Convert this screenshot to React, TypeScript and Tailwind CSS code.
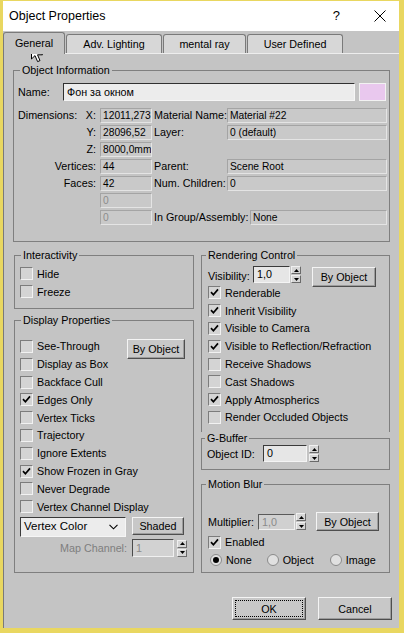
import React from "react";

type Kids = { children?: React.ReactNode };

function Legend({ children, className = "ml-[6px]" }: Kids & { className?: string }) {
  return <legend className={`px-[2px] leading-[13px] ${className}`}>{children}</legend>;
}

function Box({ checked }: { checked?: boolean }) {
  return (
    <span className="w-[13px] h-[13px] shrink-0 border border-t-[#7c7c7c] border-l-[#7c7c7c] border-b-[#f2f2f2] border-r-[#f2f2f2] bg-[#d4d4d4] flex items-center justify-center">
      {checked && (
        <svg width="9" height="9" viewBox="0 0 9 9">
          <path d="M1 4.2 L3.4 6.8 L8 1.4" stroke="#000" strokeWidth="1.7" fill="none" />
        </svg>
      )}
    </span>
  );
}

function Check({ label, checked }: { label: string; checked?: boolean }) {
  return (
    <div className="flex items-center h-[17.8px] gap-[4px] whitespace-nowrap">
      <Box checked={checked} />
      <span>{label}</span>
    </div>
  );
}

function Arrows() {
  return (
    <span className="flex flex-col w-[10px] h-[17px] gap-[1px]">
      <span className="flex-1 bg-[#d6d6d6] border border-t-[#f0f0f0] border-l-[#f0f0f0] border-b-[#6a6a6a] border-r-[#6a6a6a] flex items-center justify-center">
        <svg width="5" height="3" viewBox="0 0 5 3">
          <path d="M0 3 L2.5 0 L5 3Z" fill="#000" />
        </svg>
      </span>
      <span className="flex-1 bg-[#d6d6d6] border border-t-[#f0f0f0] border-l-[#f0f0f0] border-b-[#6a6a6a] border-r-[#6a6a6a] flex items-center justify-center">
        <svg width="5" height="3" viewBox="0 0 5 3">
          <path d="M0 0 L2.5 3 L5 0Z" fill="#000" />
        </svg>
      </span>
    </span>
  );
}

function Btn({ children, className }: Kids & { className: string }) {
  return (
    <div
      className={`flex items-center justify-center bg-[#c8c8c8] border border-t-[#f4f4f4] border-l-[#f4f4f4] border-b-[#4e4e4e] border-r-[#4e4e4e] shadow-[inset_-1px_-1px_0_#9c9c9c] ${className}`}
    >
      {children}
    </div>
  );
}

function Field({ children, className, gray }: Kids & { className: string; gray?: boolean }) {
  return (
    <div
      className={`h-[15px] shrink-0 overflow-hidden whitespace-nowrap pl-[2px] leading-[13px] text-[10.25px] bg-[#c9c9c9] border border-t-[#a4a4a4] border-l-[#a4a4a4] border-b-[#e4e4e4] border-r-[#e4e4e4] ${
        gray ? "text-[#8c8c8c]" : "text-black"
      } ${className}`}
    >
      {children}
    </div>
  );
}

function InfoRow({
  left,
  value,
  gray,
  label,
  right,
  labelW = "w-[73px]",
  rightW = "w-[160px]",
}: {
  left: React.ReactNode;
  value: string;
  gray?: boolean;
  label?: string;
  right?: string;
  labelW?: string;
  rightW?: string;
}) {
  return (
    <div className="flex items-center h-[15px]">
      <div className="w-[82px] pr-[4px] flex items-center justify-end">{left}</div>
      <Field className="w-[52px]" gray={gray}>
        {value}
      </Field>
      {label && <div className={`ml-[2px] whitespace-nowrap ${labelW}`}>{label}</div>}
      {right !== undefined && <Field className={rightW}>{right}</Field>}
    </div>
  );
}

function Cursor() {
  return (
    <svg className="absolute left-[28px] top-[42px]" width="13" height="20" viewBox="0 0 13 20">
      <path
        d="M0.5 0.5 L0.5 16 L4 12.6 L6.6 18.6 L9 17.6 L6.5 11.8 L11.5 11.8 Z"
        fill="#fff"
        stroke="#000"
        strokeWidth="1"
        strokeLinejoin="round"
      />
    </svg>
  );
}

export default function App() {
  return (
    <div className="relative w-[404px] h-[633px] overflow-hidden border-t-[1px] border-l-[3px] border-r-[5px] border-b-[5px] border-[#e9d760] bg-[#c4c4c4] font-['Liberation_Sans',Arial,sans-serif] text-[10.75px] text-black">
      {/* title bar */}
      <div className="h-[30px] bg-white flex items-center pl-[6px] pr-[13px]">
        <span className="text-[12.5px]">Object Properties</span>
        <span className="ml-auto text-[13px] mr-[34px]">?</span>
        <svg width="12" height="12" viewBox="0 0 12 12">
          <path d="M0.5 0.5 L11.5 11.5 M11.5 0.5 L0.5 11.5" stroke="#000" strokeWidth="1" />
        </svg>
      </div>

      {/* tabs */}
      <div className="h-[22px] flex items-end">
        <div className="relative z-10 w-[62px] h-[22px] -mb-[1px] bg-[#c4c4c4] border border-b-0 border-[#7a7a7a] rounded-t-[3px] flex items-center justify-center pb-[1px]">
          General
        </div>
        <div className="ml-[1px] w-[96px] h-[19px] bg-[#d7d7d7] border border-b-0 border-[#7a7a7a] rounded-t-[3px] flex items-center justify-center">
          Adv. Lighting
        </div>
        <div className="ml-[1px] w-[83px] h-[19px] bg-[#d7d7d7] border border-b-0 border-[#7a7a7a] rounded-t-[3px] flex items-center justify-center">
          mental ray
        </div>
        <div className="ml-[1px] w-[96px] h-[19px] bg-[#d7d7d7] border border-b-0 border-[#7a7a7a] rounded-t-[3px] flex items-center justify-center">
          User Defined
        </div>
      </div>

      {/* panel */}
      <div className="border-t border-t-[#ededed] border-l border-l-[#7a7a7a]">
        <fieldset className="mt-[10px] ml-[9px] w-[377px] border border-[#7f7f7f] pt-[6px] pb-[16px]">
          <Legend>Object Information</Legend>
          <div className="flex items-center h-[18px] pl-[4px]">
            <span className="w-[45px]">Name:</span>
            <div className="w-[292px] h-[18px] bg-[#ececec] border border-t-[#303030] border-l-[#303030] border-b-[#f6f6f6] border-r-[#f6f6f6] pl-[3px] leading-[16px]">
              Фон за окном
            </div>
            <div className="ml-[4px] w-[27px] h-[18px] bg-[#e9c8ee] border border-[#f2f2f2]" />
          </div>
          <div className="mt-[7px] pl-[4px] flex flex-col gap-[2px]">
            <InfoRow
              left={
                <div className="flex w-full justify-between">
                  <span>Dimensions:</span>
                  <span>X:</span>
                </div>
              }
              value="12011,273"
              label="Material Name:"
              right="Material #22"
            />
            <InfoRow left="Y:" value="28096,52" label="Layer:" right="0 (default)" />
            <InfoRow left="Z:" value="8000,0mm" />
            <InfoRow left="Vertices:" value="44" label="Parent:" right="Scene Root" />
            <InfoRow left="Faces:" value="42" label="Num. Children:" right="0" />
            <InfoRow left="" value="0" gray />
            <InfoRow
              left=""
              value="0"
              gray
              label="In Group/Assembly:"
              labelW="w-[96px]"
              right="None"
              rightW="w-[137px]"
            />
          </div>
        </fieldset>

        <div className="mt-[7px] ml-[10px] flex items-start">
          {/* left column */}
          <div className="w-[180px] flex flex-col">
            <fieldset className="border border-[#7f7f7f] pt-[3px] pb-[7px] pl-[5px]">
              <Legend className="ml-[1px]">Interactivity</Legend>
              <Check label="Hide" />
              <Check label="Freeze" />
            </fieldset>

            <fieldset className="mt-[5px] border border-[#7f7f7f] pt-[11px] pb-[15px] pl-[5px]">
              <Legend className="ml-[1px]">Display Properties</Legend>
              <div className="flex items-start">
                <div className="w-[107px]">
                  <Check label="See-Through" />
                  <Check label="Display as Box" />
                </div>
                <Btn className="mt-[1px] w-[58px] h-[20px]">By Object</Btn>
              </div>
              <Check label="Backface Cull" />
              <Check label="Edges Only" checked />
              <Check label="Vertex Ticks" />
              <Check label="Trajectory" />
              <Check label="Ignore Extents" />
              <Check label="Show Frozen in Gray" checked />
              <Check label="Never Degrade" />
              <Check label="Vertex Channel Display" />
              <div className="mt-[1.5px] flex items-center">
                <div className="w-[106px] h-[20px] bg-[#ececec] border border-t-[#3a3a3a] border-l-[#3a3a3a] border-b-[#f6f6f6] border-r-[#f6f6f6] flex items-center pl-[3px] pr-[7px]">
                  <span className="text-[11.5px]">Vertex Color</span>
                  <svg className="ml-auto" width="9" height="6" viewBox="0 0 9 6">
                    <path d="M0.5 0.8 L4.5 4.8 L8.5 0.8" stroke="#000" strokeWidth="1.1" fill="none" />
                  </svg>
                </div>
                <Btn className="ml-[6px] w-[52px] h-[18px] -mt-[2px]">Shaded</Btn>
              </div>
              <div className="mt-[2px] flex items-center h-[18px]">
                <span className="w-[107px] text-right text-[#7e7e7e]">Map Channel:</span>
                <div className="ml-[5px] w-[42px] h-[18px] bg-[#d2d2d2] border border-t-[#4a4a4a] border-l-[#4a4a4a] border-b-[#f0f0f0] border-r-[#f0f0f0] pl-[3px] leading-[16px] text-[#8a8a8a]">
                  1
                </div>
                <span className="ml-[3px]">
                  <Arrows />
                </span>
              </div>
            </fieldset>
          </div>

          {/* right column */}
          <div className="ml-[7px] w-[189px] flex flex-col">
            <fieldset className="border border-b-0 border-[#7f7f7f] pt-[3px] pb-[6px] pl-[6px]">
              <Legend className="-ml-[2px]">Rendering Control</Legend>
              <div className="flex items-start h-[19px]">
                <span className="w-[45px] mt-[3px]">Visibility:</span>
                <div className="mt-[1px] w-[37px] h-[17px] bg-[#e6e6e6] border border-t-[#3a3a3a] border-l-[#3a3a3a] border-b-[#f4f4f4] border-r-[#f4f4f4] pl-[3px] leading-[15px]">
                  1,0
                </div>
                <span className="mt-[1px] ml-[1px]">
                  <Arrows />
                </span>
                <Btn className="mt-[2px] ml-[11px] w-[64px] h-[20px]">By Object</Btn>
              </div>
              <Check label="Renderable" checked />
              <Check label="Inherit Visibility" checked />
              <Check label="Visible to Camera" checked />
              <Check label="Visible to Reflection/Refraction" checked />
              <Check label="Receive Shadows" />
              <Check label="Cast Shadows" />
              <Check label="Apply Atmospherics" checked />
              <Check label="Render Occluded Objects" />
            </fieldset>
            <fieldset className="border border-[#7f7f7f] pb-[7px] pl-[5px]">
              <Legend className="-ml-[2px]">G-Buffer</Legend>
              <div className="flex items-center h-[17px]">
                <span className="w-[56px]">Object ID:</span>
                <div className="w-[44px] h-[17px] bg-[#e6e6e6] border border-t-[#3a3a3a] border-l-[#3a3a3a] border-b-[#f4f4f4] border-r-[#f4f4f4] pl-[3px] leading-[15px]">
                  0
                </div>
                <span className="ml-[2px]">
                  <Arrows />
                </span>
              </div>
            </fieldset>
            <fieldset className="mt-[8px] border border-[#7f7f7f] pt-[20px] pb-[3px] pl-[6px]">
              <Legend className="-ml-[2px]">Motion Blur</Legend>
              <div className="flex items-center h-[21px]">
                <span className="w-[50px]">Multiplier:</span>
                <div className="w-[37px] h-[16px] bg-[#d0d0d0] border border-t-[#5a5a5a] border-l-[#5a5a5a] border-b-[#f0f0f0] border-r-[#f0f0f0] pl-[3px] leading-[14px] text-[#8a8a8a]">
                  1,0
                </div>
                <span className="ml-[1px]">
                  <Arrows />
                </span>
                <Btn className="ml-[10px] w-[63px] h-[19px]">By Object</Btn>
              </div>
              <div className="mt-[1px]">
                <Check label="Enabled" checked />
              </div>
              <div className="flex items-center h-[18px] pl-[2px]">
                <span className="w-[12px] h-[12px] rounded-full border border-[#8a8a8a] bg-[#e0e0e0] flex items-center justify-center">
                  <span className="w-[6px] h-[6px] rounded-full bg-black" />
                </span>
                <span className="ml-[4px]">None</span>
                <span className="ml-[15px] w-[12px] h-[12px] rounded-full border border-[#8a8a8a] bg-[#e0e0e0]" />
                <span className="ml-[4px]">Object</span>
                <span className="ml-[16px] w-[12px] h-[12px] rounded-full border border-[#8a8a8a] bg-[#e0e0e0]" />
                <span className="ml-[4px]">Image</span>
              </div>
            </fieldset>
          </div>
        </div>

        {/* bottom buttons */}
        <div className="mt-[24px] pl-[228px] flex gap-[12px] pb-[20px]">
          <Btn className="w-[74px] h-[23px]">
            <div className="w-[68px] h-[17px] border border-dotted border-black flex items-center justify-center">
              OK
            </div>
          </Btn>
          <Btn className="w-[74px] h-[23px]">Cancel</Btn>
        </div>
      </div>

      <Cursor />
    </div>
  );
}
